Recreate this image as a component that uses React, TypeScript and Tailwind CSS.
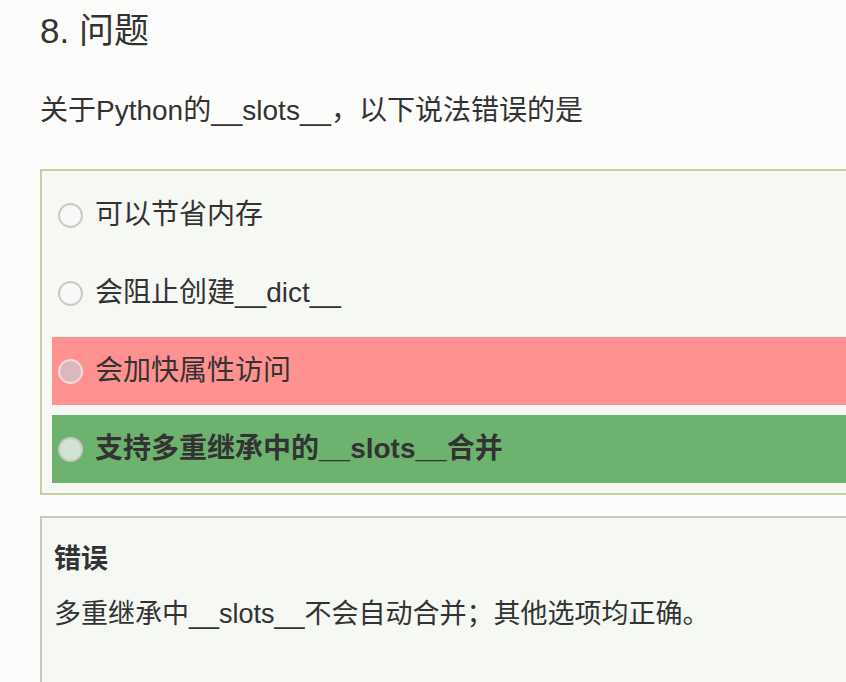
const OPTIONS = [
  { label: '可以节省内存', state: 'none' },
  { label: '会阻止创建__dict__', state: 'none' },
  { label: '会加快属性访问', state: 'wrong' },
  { label: '支持多重继承中的__slots__合并', state: 'right' },
]

function Radio({ state }: { state: string }) {
  const fill =
    state === 'wrong' ? 'bg-[#d9b9bb]' : state === 'right' ? 'bg-[#d3e2d2]' : 'bg-[#f8f8f8]'
  const ring = state === 'wrong' ? 'border-[#f3d9da]' : 'border-[#c9c9c9]'
  return (
    <span
      className={`inline-block w-[25px] h-[25px] shrink-0 rounded-full border-[2px] ${ring} ${fill}`}
    />
  )
}

export default function App() {
  return (
    <div
      className="min-h-[682px] w-[846px] overflow-hidden bg-[#fcfcfa] text-[#333333]"
      style={{ fontFamily: '"Liberation Sans", "Noto Sans CJK SC", sans-serif' }}
    >
      <div className="w-[900px] pl-[40px]">
        {/* Title */}
        <h2 className="pt-[10px] text-[35px] leading-[42px] font-normal">8. 问题</h2>

        {/* Question */}
        <p className="mt-[39px] text-[28px] leading-[40px]">关于Python的__slots__，以下说法错误的是</p>

        {/* Options */}
        <div className="mt-[38px] border-2 border-[#c4d0a2] bg-[#f6f8f3] p-[10px] flex flex-col gap-[10px]">
          {OPTIONS.map((opt, i) => (
            <div
              key={i}
              className={`h-[68px] flex items-center gap-[12px] pl-[6px] text-[28px] ${
                opt.state === 'wrong'
                  ? 'bg-[#ff9191]'
                  : opt.state === 'right'
                  ? 'bg-[#6db36f] font-bold'
                  : ''
              }`}
            >
              <Radio state={opt.state} />
              <span className="leading-none">{opt.label}</span>
            </div>
          ))}
        </div>

        {/* Explanation */}
        <div className="mt-[21px] h-[200px] border-2 border-[#c6c6c6] bg-[#f6f8f3] px-[12px] pt-[22px]">
          <div className="text-[27px] leading-[38px] font-bold">错误</div>
          <div className="mt-[17px] text-[27px] leading-[38px]">
            多重继承中__slots__不会自动合并；其他选项均正确。
          </div>
        </div>
      </div>
    </div>
  )
}
